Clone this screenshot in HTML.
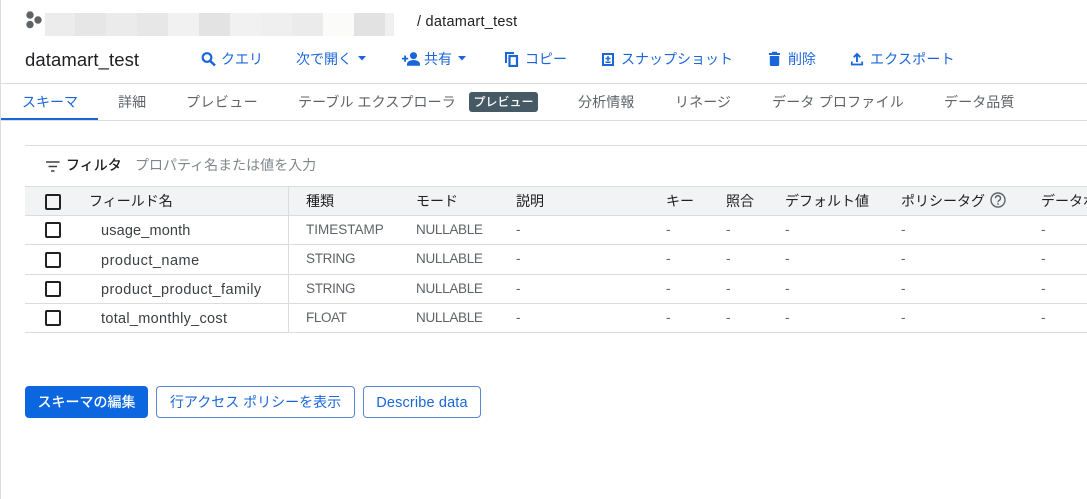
<!DOCTYPE html>
<html lang="ja"><head><meta charset="utf-8"><title>datamart_test</title>
<style>
html,body{margin:0;padding:0;background:#fff}
body{width:1087px;height:499px;position:relative;overflow:hidden;font-family:"Liberation Sans","Noto Sans CJK JP",sans-serif;font-size:14px}
.a{position:absolute;white-space:nowrap;line-height:20px}
.l{position:absolute;background:#dadce0}
.b{position:absolute;top:13px;height:23px}
.t{color:#1a66d9;top:49px}
.tab{color:#5f6368;top:92px;letter-spacing:.1px}
.h{color:#202124;top:191px}
.f{color:#3c4043;font-size:14.5px}
.g{color:#5f6368;font-size:13.5px}
.cb{position:absolute;left:45px;width:12px;height:12px;border:2px solid #202124;border-radius:2px}
svg{position:absolute}
.btn{position:absolute;top:386px;height:30px;line-height:30px;box-sizing:border-box;border-radius:4px;text-align:center;white-space:nowrap;font-size:14px}
.o{border:1px solid #5a86d6;color:#1a66d9;line-height:28px;background:#fff}
</style></head><body>
<div class="l" style="left:0;top:0;width:1px;height:499px"></div>

<svg style="left:24px;top:11px" width="20" height="18" viewBox="0 0 20 18"><g fill="#5f6368"><circle cx="6" cy="4" r="3.7"/><circle cx="6" cy="13.500" r="3.700"/><circle cx="14" cy="9" r="3.700"/></g></svg>
<div class="b" style="left:45px;width:30px;background:#ececec"></div>
<div class="b" style="left:75px;width:31px;background:#e6e6e6"></div>
<div class="b" style="left:106px;width:31px;background:#ebebeb"></div>
<div class="b" style="left:137px;width:31px;background:#e7e7e7"></div>
<div class="b" style="left:168px;width:31px;background:#f1f1f1"></div>
<div class="b" style="left:199px;width:31px;background:#e3e3e3"></div>
<div class="b" style="left:230px;width:31px;background:#f1f1f1"></div>
<div class="b" style="left:261px;width:31px;background:#efefef"></div>
<div class="b" style="left:292px;width:31px;background:#ebebeb"></div>
<div class="b" style="left:323px;width:31px;background:#fbfbfa"></div>
<div class="b" style="left:354px;width:31px;background:#e2e2e3"></div>
<div class="b" style="left:385px;width:9px;background:#f0f0f0"></div>
<div class="a" style="left:417px;top:12px;font-size:14.5px;letter-spacing:.25px;color:#202124">/ datamart_test</div>

<div class="a" style="left:25px;top:49px;font-size:18.5px;line-height:22px;letter-spacing:.08px;color:#202124">datamart_test</div>

<svg style="left:200px;top:51px" width="16" height="16" viewBox="0 0 16 16"><circle cx="7" cy="6.500" r="4.300" fill="none" stroke="#1a66d9" stroke-width="2.200"/><path d="M10 9.800L15 14.500" stroke="#1a66d9" stroke-width="2.500"/></svg>
<div class="a t" style="left:221px">クエリ</div>
<div class="a t" style="left:296px">次で開く</div>
<svg style="left:357px;top:56px" width="12" height="6"><path d="M1 0h8L5 4.500z" fill="#1a66d9"/></svg>
<svg style="left:402px;top:52px" width="18" height="14" viewBox="0 0 18 14"><g fill="#1a66d9"><circle cx="11.500" cy="3.600" r="3.500"/><path d="M5 13.800V12c0-2.600 3.700-4 6.500-4s6.500 1.400 6.500 4v1.800z"/><path d="M2.200 3.500h1.800v2.200h2.200v1.800H4v2.200H2.200V7.500H0V5.700h2.200z"/></g></svg>
<div class="a t" style="left:424px">共有</div>
<svg style="left:457px;top:56px" width="12" height="6"><path d="M1 0h8L5 4.500z" fill="#1a66d9"/></svg>
<svg style="left:505px;top:52px" width="14" height="15" viewBox="0 0 14 15"><path d="M1 11V1h8" fill="none" stroke="#1a66d9" stroke-width="2"/><rect x="4.500" y="4" width="7.500" height="10" fill="none" stroke="#1a66d9" stroke-width="2.200"/></svg>
<div class="a t" style="left:525px">コピー</div>
<svg style="left:602px;top:53px" width="12" height="13" viewBox="0 0 12 13"><path fill-rule="evenodd" fill="#1a66d9" d="M0 0h12v13H0zM2 2v9h8V2z"/><path d="M6 3v5M3.500 5.500h5M3.500 9.300h5" stroke="#1a66d9" stroke-width="1.500"/></svg>
<div class="a t" style="left:621px">スナップショット</div>
<svg style="left:768px;top:51px" width="13" height="16" viewBox="0 0 13 16"><path d="M1 2h11v2H1zM4 .8h5V3H4z" fill="#1a66d9"/><path d="M1.800 5h9.400v8.500A1.500 1.500 0 0 1 9.700 15H3.300a1.500 1.500 0 0 1-1.500-1.500z" fill="#1a66d9"/></svg>
<div class="a t" style="left:788px">削除</div>
<svg style="left:850px;top:52px" width="14" height="14" viewBox="0 0 14 14"><path d="M7 10V2.500M3.800 5.200L7 2l3.200 3.200" fill="none" stroke="#1a66d9" stroke-width="1.900"/><path d="M1.800 9.500v3h10.400v-3" fill="none" stroke="#1a66d9" stroke-width="1.700"/></svg>
<div class="a t" style="left:870px;letter-spacing:.2px">エクスポート</div>

<div class="l" style="left:0;top:83px;width:1087px;height:1px"></div>
<div class="l" style="left:0;top:120px;width:1087px;height:1px"></div>
<div style="position:absolute;left:1px;top:118px;height:2px;background:#1a66d9;width:97px"></div>
<div class="a" style="left:22px;top:92px;color:#1a66d9">スキーマ</div>
<div class="a tab" style="left:118px">詳細</div>
<div class="a tab" style="left:186px;letter-spacing:.4px">プレビュー</div>
<div class="a tab" style="left:298px">テーブル エクスプローラ</div>
<div class="a" style="left:469px;top:92px;width:69px;height:20px;background:#455a64;color:#fff;font-size:12px;font-weight:500;text-align:center;border-radius:3px">プレビュー</div>
<div class="a tab" style="left:578px">分析情報</div>
<div class="a tab" style="left:675px">リネージ</div>
<div class="a tab" style="left:772px;letter-spacing:.2px">データ プロファイル</div>
<div class="a tab" style="left:944px;letter-spacing:.1px">データ品質</div>

<div class="l" style="left:25px;top:145px;width:1062px;height:1px"></div>
<svg style="left:46px;top:160px" width="14" height="13"><path d="M0 2h13.500M2.500 6.500h8.500M5 11h3.500" stroke="#3c4043" stroke-width="1.600"/></svg>
<div class="a" style="left:66px;top:155px;color:#202124;font-weight:500">フィルタ</div>
<div class="a" style="left:135px;top:155px;color:#80868b">プロパティ名または値を入力</div>

<div style="position:absolute;left:25px;top:186px;width:1062px;height:29px;background:#f1f3f4"></div>
<div class="l" style="left:25px;top:186px;width:1062px;height:1px"></div>
<div class="l" style="left:25px;top:215px;width:1062px;height:1px"></div>
<div class="l" style="left:25px;top:244px;width:1062px;height:1px"></div>
<div class="l" style="left:25px;top:274px;width:1062px;height:1px"></div>
<div class="l" style="left:25px;top:303px;width:1062px;height:1px"></div>
<div class="l" style="left:25px;top:332px;width:1062px;height:1px"></div>
<div class="l" style="left:288px;top:186px;width:1px;height:147px"></div>

<div class="cb" style="top:194px"></div>
<div class="cb" style="top:222px"></div>
<div class="cb" style="top:252px"></div>
<div class="cb" style="top:281px"></div>
<div class="cb" style="top:310px"></div>

<div class="a h" style="left:89px">フィールド名</div>
<div class="a h" style="left:306px">種類</div>
<div class="a h" style="left:416px">モード</div>
<div class="a h" style="left:516px">説明</div>
<div class="a h" style="left:666px">キー</div>
<div class="a h" style="left:726px">照合</div>
<div class="a h" style="left:785px">デフォルト値</div>
<div class="a h" style="left:901px">ポリシータグ</div>
<svg style="left:990px;top:192px" width="16" height="16" viewBox="0 0 16 16"><circle cx="8" cy="8" r="7" fill="none" stroke="#5f6368" stroke-width="1.400"/><path d="M5.500 6.200a2.500 2.500 0 1 1 3.800 2.100c-.8.500-1.300.9-1.300 1.800" fill="none" stroke="#5f6368" stroke-width="1.400"/><circle cx="8" cy="12" r=".9" fill="#5f6368"/></svg>
<div class="a h" style="left:1041px">データポリシー</div>

<div class="a f" style="left:101px;top:221px;letter-spacing:.15px">usage_month</div>
<div class="a f" style="left:101px;top:251px;letter-spacing:.5px">product_name</div>
<div class="a f" style="left:101px;top:280px;letter-spacing:.45px">product_product_family</div>
<div class="a f" style="left:101px;top:309px;letter-spacing:.3px">total_monthly_cost</div>

<div class="a g" style="left:306px;top:220px">TIMESTAMP</div>
<div class="a g" style="left:306px;top:249px;letter-spacing:-.3px">STRING</div>
<div class="a g" style="left:306px;top:279px;letter-spacing:-.3px">STRING</div>
<div class="a g" style="left:306px;top:308px;letter-spacing:-.4px">FLOAT</div>

<div class="a g" style="left:416px;top:220px;letter-spacing:-.3px">NULLABLE</div>
<div class="a g" style="left:416px;top:249px;letter-spacing:-.3px">NULLABLE</div>
<div class="a g" style="left:416px;top:279px;letter-spacing:-.3px">NULLABLE</div>
<div class="a g" style="left:416px;top:308px;letter-spacing:-.3px">NULLABLE</div>

<div class="a g" style="left:516px;top:220px">-</div><div class="a g" style="left:666px;top:220px">-</div><div class="a g" style="left:726px;top:220px">-</div><div class="a g" style="left:785px;top:220px">-</div><div class="a g" style="left:901px;top:220px">-</div><div class="a g" style="left:1041px;top:220px">-</div>
<div class="a g" style="left:516px;top:249px">-</div><div class="a g" style="left:666px;top:249px">-</div><div class="a g" style="left:726px;top:249px">-</div><div class="a g" style="left:785px;top:249px">-</div><div class="a g" style="left:901px;top:249px">-</div><div class="a g" style="left:1041px;top:249px">-</div>
<div class="a g" style="left:516px;top:279px">-</div><div class="a g" style="left:666px;top:279px">-</div><div class="a g" style="left:726px;top:279px">-</div><div class="a g" style="left:785px;top:279px">-</div><div class="a g" style="left:901px;top:279px">-</div><div class="a g" style="left:1041px;top:279px">-</div>
<div class="a g" style="left:516px;top:308px">-</div><div class="a g" style="left:666px;top:308px">-</div><div class="a g" style="left:726px;top:308px">-</div><div class="a g" style="left:785px;top:308px">-</div><div class="a g" style="left:901px;top:308px">-</div><div class="a g" style="left:1041px;top:308px">-</div>

<div class="btn" style="left:25px;width:123px;height:32px;line-height:32px;background:#0b66e0;color:#fff;font-weight:500">スキーマの編集</div>
<div class="btn o" style="left:156px;width:199px;height:32px;line-height:30px">行アクセス ポリシーを表示</div>
<div class="btn o" style="left:363px;width:118px;height:32px;line-height:32px;font-size:14.5px;letter-spacing:.15px">Describe data</div>
</body></html>
